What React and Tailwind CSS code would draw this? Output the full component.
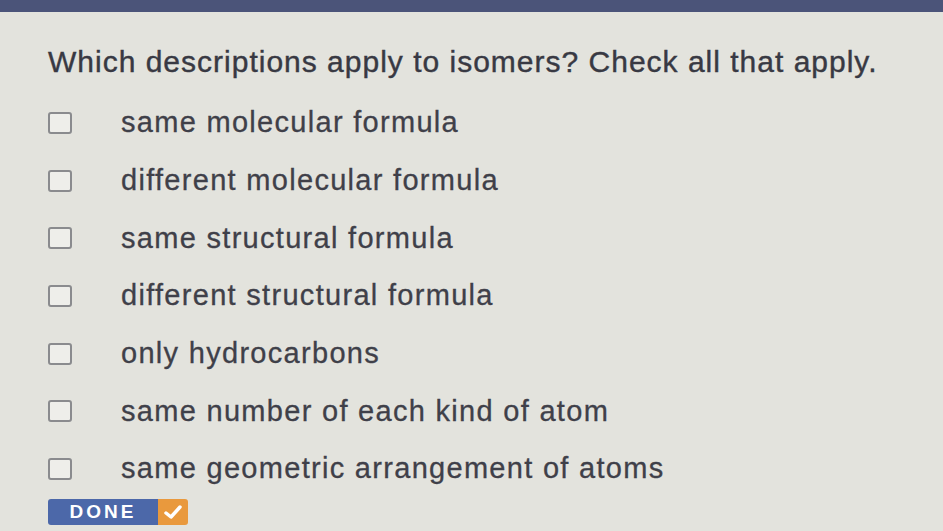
import React from 'react';

const options = [
  'same molecular formula',
  'different molecular formula',
  'same structural formula',
  'different structural formula',
  'only hydrocarbons',
  'same number of each kind of atom',
  'same geometric arrangement of atoms',
];

export default function App() {
  return (
    <div className="w-[943px] h-[531px] overflow-hidden bg-[#e3e3dd] font-['Liberation_Sans',Arial,sans-serif] text-[#383943]">
      <div className="h-[12px] bg-[#4b5479]" />
      <div className="pl-[48px] pt-[32px]">
        <h1 className="text-[30px] leading-[36px] tracking-[1px] [-webkit-text-stroke:0.4px_#383943]">
          Which descriptions apply to isomers? Check all that apply.
        </h1>
        <div className="mt-[14px] flex flex-col">
          {options.map((text, i) => (
            <label key={i} className="flex items-center h-[57.7px]">
              <span className="w-[24px] h-[22px] rounded-[3px] border-2 border-[#8a8b8e] bg-[#eeeeea]" />
              <span className="ml-[49px] text-[29px] leading-none tracking-[1.3px] text-[#3f4049] [-webkit-text-stroke:0.3px_#3f4049]">
                {text}
              </span>
            </label>
          ))}
        </div>
        <div className="mt-[1px] flex h-[26px] w-[140px] rounded-[3px] overflow-hidden">
          <div className="flex-1 bg-[#4c68a9] flex items-center justify-center text-white font-bold text-[19px] tracking-[3px]">
            DONE
          </div>
          <div className="w-[30px] bg-[#e9993d] flex items-center justify-center">
            <svg width="18" height="16" viewBox="0 0 18 16">
              <path d="M2 9 L7 13 L16 3" fill="none" stroke="white" strokeWidth="3.5" strokeLinecap="round" strokeLinejoin="round" />
            </svg>
          </div>
        </div>
      </div>
    </div>
  );
}
